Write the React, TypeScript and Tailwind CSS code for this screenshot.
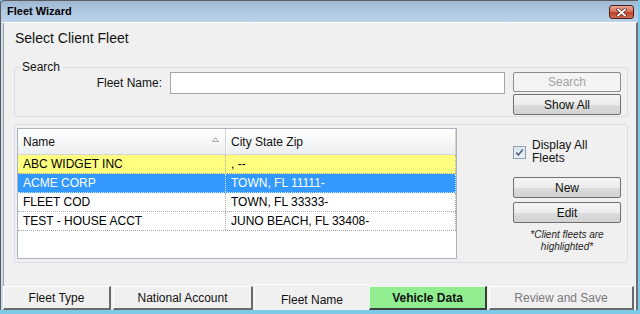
import React from 'react';

const rows = [
  { name: 'ABC WIDGET INC', city: ', --', kind: 'client' },
  { name: 'ACME CORP', city: 'TOWN, FL 11111-', kind: 'selected' },
  { name: 'FLEET COD', city: 'TOWN, FL 33333-', kind: 'plain' },
  { name: 'TEST - HOUSE ACCT', city: 'JUNO BEACH, FL 33408-', kind: 'plain' },
];

function WinButton({ label, disabled, className }: { label: string; disabled?: boolean; className?: string }) {
  return (
    <div
      className={
        'flex w-[108px] items-center justify-center rounded-[2px] border text-[12px] leading-none ' +
        (disabled
          ? 'border-[#8c8c8c] bg-[#f4f4f4] text-[#a3a3a3] '
          : 'border-[#707070] bg-[linear-gradient(to_bottom,#f4f4f4_0%,#ececec_50%,#dcdcdc_54%,#d2d2d2_100%)] text-[#111] ') +
        (className ?? '')
      }
    >
      {label}
    </div>
  );
}

function CloseButton() {
  return (
    <div className="flex h-[14px] w-[25px] items-center justify-center rounded-[3px] border border-[#4a1f1a] bg-[linear-gradient(to_bottom,#e9a693_0%,#d9745d_45%,#c1432b_55%,#d16a4f_100%)]">
      <svg width="11" height="9" viewBox="0 0 11 9">
        <path d="M2 1.5 L9 7.5 M9 1.5 L2 7.5" stroke="#5a2a22" strokeWidth="3.2" strokeLinecap="square" />
        <path d="M2 1.5 L9 7.5 M9 1.5 L2 7.5" stroke="#ffffff" strokeWidth="1.8" strokeLinecap="square" />
      </svg>
    </div>
  );
}

function Tab({ label, className }: { label: string; className: string }) {
  return <div className={'flex items-center justify-center text-[12px] ' + className}>{label}</div>;
}

export default function App() {
  return (
    <div className="flex h-[314px] w-[640px] bg-[#7cc9e8] pb-[4px] pr-[2px] font-['Liberation_Sans',Arial,sans-serif] text-[#111]">
      <div className="flex flex-1 flex-col rounded-tl-[4px] border-l border-l-[#5c5c5c]">
        {/* title bar */}
        <div className="flex h-[22px] items-start justify-between rounded-tl-[4px] border-t border-t-[#5c5c5c] bg-[linear-gradient(to_bottom,#9db7d4_0%,#b0c8e2_50%,#bcd3ea_100%)] pl-[6px] pr-[4px]">
          <span className="pt-[4px] text-[11px] font-bold leading-[13px] text-black">Fleet Wizard</span>
          <div className="pt-[4px]">
            <CloseButton />
          </div>
        </div>

        {/* body */}
        <div className="flex flex-1 flex-col border-l-2 border-r-2 border-t border-l-[#c9dbee] border-r-[#6f6f6f] border-t-white bg-[#f0f0f0] shadow-[inset_1px_0_0_#a0a0a0]">
          <div className="ml-[12px] mt-[7px] text-[14px] leading-[16px]">Select Client Fleet</div>

          <fieldset className="ml-[11px] mr-[8px] mt-[14px] rounded-[3px] border border-[#d5dfe5] pb-[1px]">
            <legend className="ml-[5px] px-[2px] text-[12px] leading-[14px]">Search</legend>
            <div className="-mt-[2px] flex items-start">
              <div className="flex h-[22px] w-[147px] items-center justify-end text-[12px]">Fleet Name:</div>
              <div className="ml-[8px] h-[22px] w-[335px] border border-[#a5a5a5] bg-white" />
              <div className="ml-[8px] flex flex-col gap-[2px]">
                <WinButton label="Search" disabled className="h-[20px]" />
                <WinButton label="Show All" className="h-[21px]" />
              </div>
            </div>
          </fieldset>

          <div className="ml-[11px] mr-[8px] mt-[7px] flex rounded-[3px] border border-[#d5dfe5] px-[2px] py-[3px]">
            {/* list */}
            <div className="flex h-[131px] w-[440px] flex-col border border-[#abb4bf] bg-white text-[12px]">
              <div className="flex h-[26px] border-b border-[#d5d5d5] bg-[linear-gradient(to_bottom,#ffffff_0%,#f7f8f9_50%,#eceef0_100%)]">
                <div className="relative flex w-[208px] items-center border-r border-[#d5d5d5] pl-[5px] shadow-[1px_0_0_#ffffff]">
                  Name
                  <svg className="absolute right-[6px] top-[8px]" width="7" height="5" viewBox="0 0 7 5">
                    <path d="M0.5 4.5 L3.5 0.5 L6.5 4.5 Z" fill="none" stroke="#a8a8a8" strokeWidth="1" />
                  </svg>
                </div>
                <div className="flex flex-1 items-center border-r border-[#d5d5d5] pl-[5px]">City State Zip</div>
              </div>
              {rows.map((r) => (
                <div
                  key={r.name}
                  className={
                    'flex h-[19px] border-b border-dotted ' +
                    (r.kind === 'client'
                      ? 'border-[#a8a8a8] bg-[#ffff80] text-black'
                      : r.kind === 'selected'
                        ? 'border-[#cfe3ff] bg-[#3399ff] text-white'
                        : 'border-[#a8a8a8] bg-white text-black')
                  }
                >
                  <div
                    className={
                      'flex w-[208px] items-center border-r border-dotted pl-[5px] ' +
                      (r.kind === 'selected' ? 'border-[#cfe3ff]' : 'border-[#a8a8a8]')
                    }
                  >
                    {r.name}
                  </div>
                  <div
                    className={
                      'flex flex-1 items-center border-r border-dotted pl-[5px] ' +
                      (r.kind === 'selected' ? 'border-[#cfe3ff]' : 'border-[#a8a8a8]')
                    }
                  >
                    {r.city}
                  </div>
                </div>
              ))}
            </div>

            {/* side panel */}
            <div className="ml-[56px] flex w-[108px] flex-col">
              <div className="mt-[11px] flex items-center">
                <div className="flex h-[13px] w-[13px] items-center justify-center border border-[#8e9fb5] bg-[linear-gradient(to_bottom,#dde4ec,#eef2f6)]">
                  <svg width="9" height="9" viewBox="0 0 9 9">
                    <path d="M1.2 4.6 L3.4 7 L7.8 1.4" fill="none" stroke="#4f6688" strokeWidth="1.6" />
                  </svg>
                </div>
                <div className="ml-[6px] text-[12px] leading-[13px]">
                  Display All
                  <br />
                  Fleets
                </div>
              </div>
              <WinButton label="New" className="mt-[12px] h-[21px]" />
              <WinButton label="Edit" className="mt-[4px] h-[21px]" />
              <div className="mt-[6px] text-center text-[10px] italic leading-[12px] text-[#222]">
                *Client fleets are
                <br />
                highlighted*
              </div>
            </div>
          </div>

          {/* wizard steps */}
          <div className="mt-auto flex items-end">
            <Tab label="Fleet Type" className="h-[24px] w-[108px] border-b-2 border-l border-r-2 border-t border-b-[#6a6a6a] border-l-white border-r-[#6a6a6a] border-t-white bg-[#f0f0f0]" />
            <Tab label="National Account" className="ml-[2px] h-[24px] w-[140px] border-b-2 border-l border-r-2 border-t border-b-[#6a6a6a] border-l-white border-r-[#6a6a6a] border-t-white bg-[#f0f0f0]" />
            <Tab label="Fleet Name" className="ml-[1px] h-[26px] w-[115px] border-l border-t border-l-white border-t-white bg-[#f0f0f0] pt-[4px]" />
            <Tab label="Vehicle Data" className="h-[24px] w-[118px] border-b-2 border-l border-r-2 border-t border-b-[#3c3c3c] border-l-[#e8ffe8] border-r-[#3c3c3c] border-t-[#e8ffe8] bg-[#90ee90] font-bold" />
            <Tab label="Review and Save" className="ml-[2px] h-[24px] w-[145px] border-b-2 border-l border-r-2 border-t border-b-[#6a6a6a] border-l-white border-r-[#6a6a6a] border-t-white bg-[#f0f0f0] text-[#7a7a7a]" />
          </div>
        </div>
      </div>
    </div>
  );
}
